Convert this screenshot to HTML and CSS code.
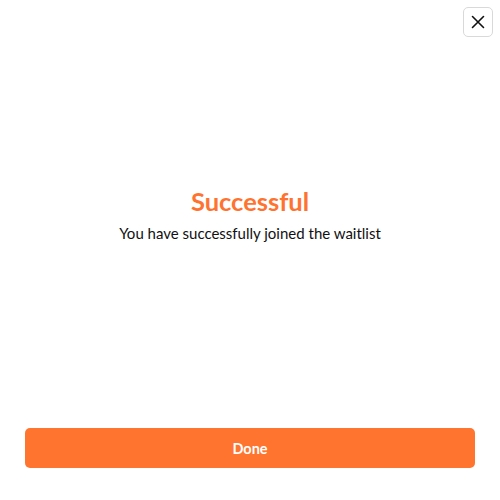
FILE: index.html
```html
<!DOCTYPE html>
<html>
<head>
<meta charset="utf-8">
<link rel="stylesheet" href="styles.css">
</head>
<body>
<div class="modal">
  <div class="topbar">
    <button class="close" aria-label="Close">
      <svg width="14" height="14" viewBox="0 0 14 14"><path d="M1.5 1.5L12.5 12.5M12.5 1.5L1.5 12.5" stroke="#111" stroke-width="1.6" stroke-linecap="round"/></svg>
    </button>
  </div>
  <div class="content">
    <h1 class="title">Successful</h1>
    <p class="subtitle">You have successfully joined the waitlist</p>
  </div>
  <div class="footer">
    <button class="done">Done</button>
  </div>
</div>
</body>
</html>
```
FILE: styles.css
```css
* { box-sizing: border-box; }
html, body { margin: 0; padding: 0; background: #fff; }
body { font-family: Lato, "Open Sans", sans-serif; color: #111; }
.modal {
  width: 500px;
  height: 500px;
  display: flex;
  flex-direction: column;
}
.topbar {
  display: flex;
  justify-content: flex-end;
  padding: 7px 7px 0 0;
}
.close {
  width: 30px;
  height: 30px;
  border: 1px solid #d9d9d9;
  border-radius: 5px;
  background: #fff;
  display: flex;
  align-items: center;
  justify-content: center;
  padding: 0;
}
.content {
  flex: 1;
  display: flex;
  flex-direction: column;
  align-items: center;
  justify-content: center;
  padding-bottom: 38px;
}
.title {
  margin: 0;
  font-size: 25.5px;
  font-weight: 700;
  color: #ff7330;
  line-height: 30px;
}
.subtitle {
  margin: 8px 0 0;
  font-size: 15px;
  line-height: 18px;
  color: #111;
}
.footer {
  padding: 0 25px 32px;
}
.done {
  width: 100%;
  height: 40px;
  border: none;
  border-radius: 5px;
  background: #ff742e;
  color: #fff;
  font-family: Lato, "Open Sans", sans-serif;
  font-size: 14.5px;
  font-weight: 700;
}
```
